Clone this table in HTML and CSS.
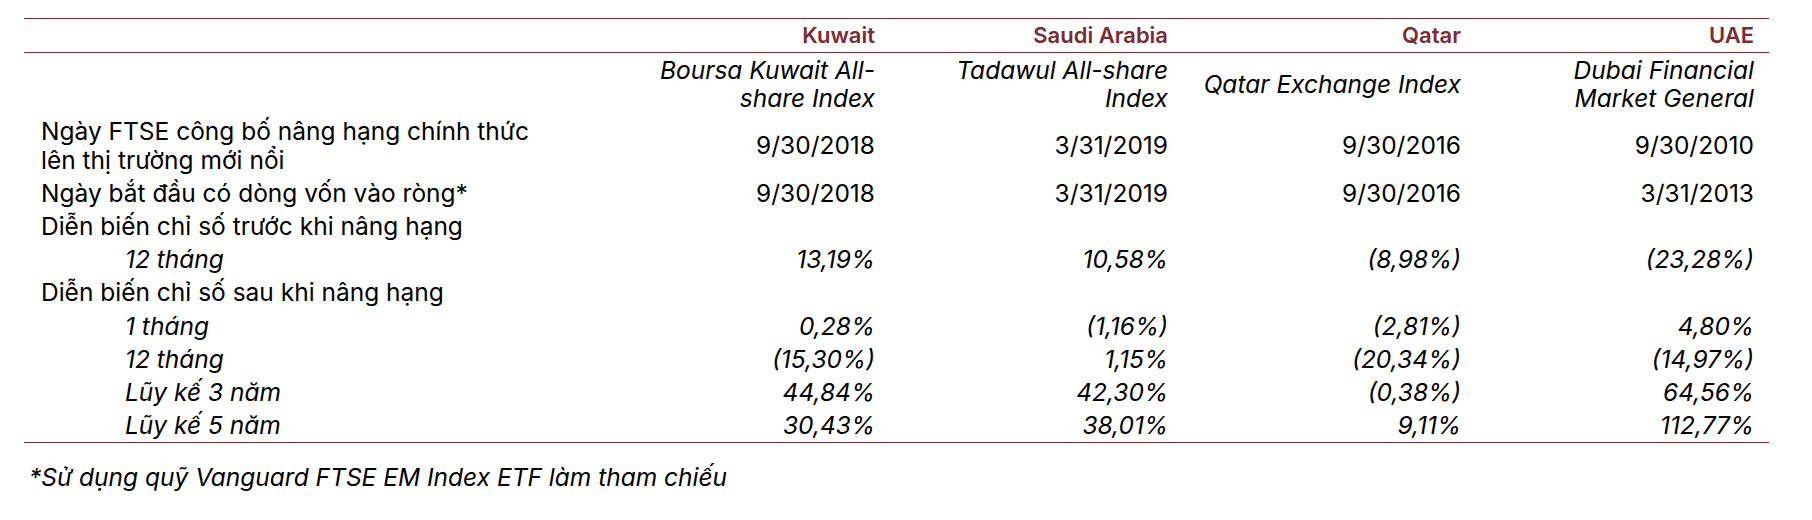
FILE: index.html
```html
<!DOCTYPE html>
<html lang="vi">
<head>
<meta charset="utf-8">
<link rel="stylesheet" href="styles.css">
</head>
<body>
<div class="page">
  <table class="cmp">
    <colgroup>
      <col class="c-label">
      <col class="c-data">
      <col class="c-data">
      <col class="c-data">
      <col class="c-data">
    </colgroup>
    <thead>
      <tr class="hdr">
        <th></th>
        <th>Kuwait</th>
        <th>Saudi Arabia</th>
        <th>Qatar</th>
        <th>UAE</th>
      </tr>
    </thead>
    <tbody>
      <tr class="sub">
        <td></td>
        <td>Boursa Kuwait All-<br>share Index</td>
        <td>Tadawul All-share<br>Index</td>
        <td>Qatar Exchange Index</td>
        <td>Dubai Financial<br>Market General</td>
      </tr>
      <tr>
        <td class="lbl">Ngày FTSE công bố nâng hạng chính thức<br>lên thị trường mới nổi</td>
        <td>9/30/2018</td>
        <td>3/31/2019</td>
        <td>9/30/2016</td>
        <td>9/30/2010</td>
      </tr>
      <tr>
        <td class="lbl">Ngày bắt đầu có dòng vốn vào ròng*</td>
        <td>9/30/2018</td>
        <td>3/31/2019</td>
        <td>9/30/2016</td>
        <td>3/31/2013</td>
      </tr>
      <tr>
        <td class="lbl">Diễn biến chỉ số trước khi nâng hạng</td>
        <td></td><td></td><td></td><td></td>
      </tr>
      <tr class="pct">
        <td class="lbl sub-lbl">12 tháng</td>
        <td>13,19%</td>
        <td>10,58%</td>
        <td>(8,98%)</td>
        <td>(23,28%)</td>
      </tr>
      <tr>
        <td class="lbl">Diễn biến chỉ số sau khi nâng hạng</td>
        <td></td><td></td><td></td><td></td>
      </tr>
      <tr class="pct">
        <td class="lbl sub-lbl">1 tháng</td>
        <td>0,28%</td>
        <td>(1,16%)</td>
        <td>(2,81%)</td>
        <td>4,80%</td>
      </tr>
      <tr class="pct">
        <td class="lbl sub-lbl">12 tháng</td>
        <td>(15,30%)</td>
        <td>1,15%</td>
        <td>(20,34%)</td>
        <td>(14,97%)</td>
      </tr>
      <tr class="pct">
        <td class="lbl sub-lbl">Lũy kế 3 năm</td>
        <td>44,84%</td>
        <td>42,30%</td>
        <td>(0,38%)</td>
        <td>64,56%</td>
      </tr>
      <tr class="pct last">
        <td class="lbl sub-lbl">Lũy kế 5 năm</td>
        <td>30,43%</td>
        <td>38,01%</td>
        <td>9,11%</td>
        <td>112,77%</td>
      </tr>
    </tbody>
  </table>
  <p class="note">*Sử dụng quỹ Vanguard FTSE EM Index ETF làm tham chiếu</p>
</div>
</body>
</html>
```

FILE: styles.css
```css
html, body {
  margin: 0;
  padding: 0;
  background: #ffffff;
}

body {
  font-family: Inter, "Noto Sans", "Liberation Sans", sans-serif;
  font-size: 24.5px;
  color: #000000;
}

.page {
  padding: 18px 0 0 24px;
}

.cmp {
  border-collapse: collapse;
  width: 1745px;
  table-layout: fixed;
}

.c-label { width: 573px; }
.c-data { width: 293px; }

.cmp th,
.cmp td {
  padding: 2.4px 15px 2.4px 17px;
  line-height: 28.4px;
  text-align: right;
  vertical-align: middle;
  font-weight: 400;
}

.hdr th {
  font-size: 22px;
  color: #7a2b33;
  font-weight: 600;
  border-top: 1px solid #7a2b33;
  border-bottom: 1px solid #7a2b33;
}

.sub td {
  font-style: italic;
}

.cmp td.lbl {
  text-align: left;
}

.cmp td.sub-lbl {
  padding-left: 101px;
  font-style: italic;
}

.pct td {
  font-style: italic;
}

.last td {
  border-bottom: 1px solid #7a2b33;
}

.note {
  margin: 20px 0 0 5px;
  font-style: italic;
  line-height: 28.4px;
}
```
